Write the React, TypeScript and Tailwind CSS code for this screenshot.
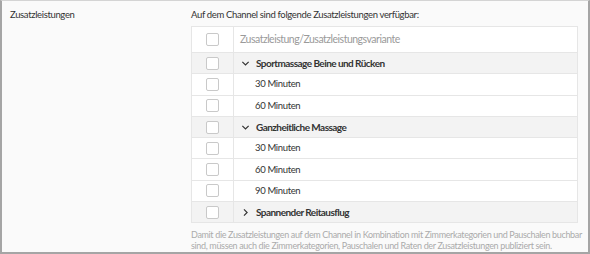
const groups = [
  { title: 'Sportmassage Beine und Rücken', open: true, items: ['30 Minuten', '60 Minuten'] },
  { title: 'Ganzheitliche Massage', open: true, items: ['30 Minuten', '60 Minuten', '90 Minuten'] },
  { title: 'Spannender Reitausflug', open: false, items: [] as string[] },
];

const Box = () => <span className="block h-[13px] w-[13px] rounded-[2px] border border-[#c9c9c9] bg-white" />;

const Chevron = ({ open }: { open: boolean }) => (
  <svg width="9" height="9" viewBox="0 0 10 10" className="shrink-0">
    {open ? (
      <path d="M1.5 3.2 L5 6.7 L8.5 3.2" fill="none" stroke="#333" strokeWidth="1.3" />
    ) : (
      <path d="M3.3 1.5 L6.8 5 L3.3 8.5" fill="none" stroke="#333" strokeWidth="1.3" />
    )}
  </svg>
);

const Row = ({ children, group }: { children: React.ReactNode; group?: boolean }) => (
  <div className={`flex h-[21.3px] border-t border-[#e6e6e6] ${group ? 'bg-[#f3f3f3]' : 'bg-white'}`}>
    <div className="flex w-[42px] shrink-0 items-center justify-center border-r border-[#e6e6e6]">
      <Box />
    </div>
    <div className="flex items-center">{children}</div>
  </div>
);

export default function App() {
  return (
    <div className="h-[254px] w-[590px] border-x-2 border-b-2 border-t border-x-[#a5a5a5] border-b-[#a5a5a5] border-t-[#d4d4d4] bg-[#fafafa] font-['Lato',sans-serif] text-[9.5px] tracking-[-0.35px] text-[#333]">
      <div className="flex">
        <div className="w-[189px] shrink-0 pl-[8px] pt-[7px] leading-[13px]">Zusatzleistungen</div>
        <div className="w-[387px] pt-[7px]">
          <p className="leading-[13px]">Auf dem Channel sind folgende Zusatzleistungen verfügbar:</p>

          <div className="mt-[5px] border-x border-b border-[#e6e6e6] bg-white">
            <div className="flex h-[26px] border-t border-[#e6e6e6]">
              <div className="flex w-[42px] shrink-0 items-center justify-center border-r border-[#e6e6e6]">
                <Box />
              </div>
              <div className="flex items-center pl-[6px] text-[10.5px] tracking-[-0.5px] text-[#9a9a9a]">
                Zusatzleistung/Zusatzleistungsvariante
              </div>
            </div>
            {groups.map((g) => (
              <div key={g.title}>
                <Row group>
                  <div className="flex items-center gap-[6px] pl-[7px] text-[10px] font-bold tracking-[-0.55px]">
                    <Chevron open={g.open} />
                    {g.title}
                  </div>
                </Row>
                {g.items.map((item) => (
                  <Row key={g.title + item}>
                    <span className="pl-[21px]">{item}</span>
                  </Row>
                ))}
              </div>
            ))}
          </div>

          <p className="mt-[6px] whitespace-nowrap text-[9px] leading-[11px] tracking-[-0.35px] text-[#ababab]">
            Damit die Zusatzleistungen auf dem Channel in Kombination mit Zimmerkategorien und Pauschalen buchbar
            <br />
            sind, müssen auch die Zimmerkategorien, Pauschalen und Raten der Zusatzleistungen publiziert sein.
          </p>
        </div>
      </div>
    </div>
  );
}
